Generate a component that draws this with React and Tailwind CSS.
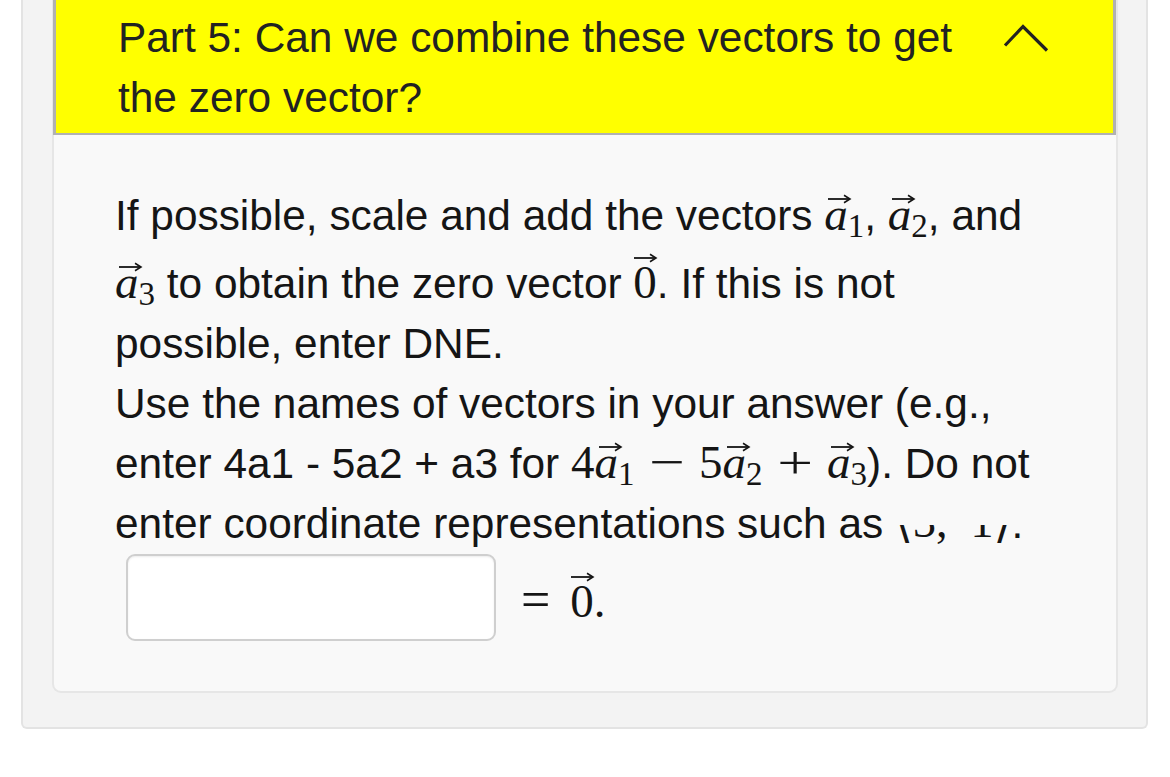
import React from "react";

const Arrow = ({ className }) => (
  <svg
    className={"absolute pointer-events-none " + className}
    width="25"
    height="10"
    viewBox="0 0 25 10"
    fill="none"
    stroke="currentColor"
  >
    <path d="M1 5H22" strokeWidth="1.8" />
    <path d="M17 1.2 L23 5 L17 8.8" strokeWidth="1.6" />
  </svg>
);

const VecA = ({ sub }) => (
  <span className="inline-block">
    <span className="relative inline-block italic">
      a
      <Arrow className="left-[3px] top-[3px]" />
    </span>
    <span className="text-[33px] align-[-7px] not-italic">{sub}</span>
  </span>
);

const VecZero = ({ className = "" }) => (
  <span className={"relative inline-block " + className}>
    0
    <Arrow className="left-[0px] bottom-[43px]" />
  </span>
);

const M = ({ children, className = "" }) => (
  <span
    className={
      "font-['Liberation_Serif','DejaVu_Serif',serif] text-[47px] leading-none " +
      className
    }
  >
    {children}
  </span>
);

const Op = ({ children }) => (
  <span className="inline-block scale-x-[1.35] mx-[19px]">{children}</span>
);

export default function App() {
  return (
    <div className="w-[1170px] h-[777px] bg-white font-['Liberation_Sans',Arial,Helvetica,sans-serif] text-[#151515] overflow-hidden">
      <div className="ml-[21px] w-[1127px] bg-[#f3f3f3] border-x-2 border-b-2 border-[#e3e3e3] rounded-b-[6px] pl-[29px] pr-[28px] pb-[34px]">
        <div className="bg-[#f9f9f9] border-x-2 border-b-2 border-[#e6e6e6] rounded-b-[9px]">
          {/* Header */}
          <div className="-ml-[1px] bg-[#ffff00] border-l-[3px] border-r-[3px] border-b-2 border-[#b1b1b1] flex pl-[62px] pt-[8px] pb-[5px]">
            <div className="flex-1 text-[42.4px] leading-[60px] text-[#222]">
              Part 5: Can we combine these vectors to get the zero vector?
            </div>
            <div className="w-[46px] mr-[64px] ml-[12px] pt-[16px]">
              <svg width="46" height="28" viewBox="0 0 46 28" fill="none">
                <polyline
                  points="2,21.5 20,2.5 44,26.5"
                  stroke="#222"
                  strokeWidth="3.2"
                  strokeLinecap="butt"
                  strokeLinejoin="miter"
                />
              </svg>
            </div>
          </div>

          {/* Body */}
          <div className="pl-[61px] pr-[60px] pt-[51px] pb-[50px]">
            <div className="text-[42.4px] leading-[60px]">
              If possible, scale and add the vectors{" "}
              <M>
                <VecA sub="1" />
              </M>
              ,{" "}
              <M>
                <VecA sub="2" />
              </M>
              , and{" "}
              <M>
                <VecA sub="3" />
              </M>{" "}
              to obtain the zero vector{" "}
              <M>
                <VecZero className="pt-[13px]" />
              </M>
              . If this is not possible, enter DNE.
              <br />
              Use the names of vectors in your answer (e.g., enter 4a1 - 5a2 + a3 for{" "}
              <M>
                4<VecA sub="1" />
                <Op>−</Op>5<VecA sub="2" />
                <Op>+</Op>
                <VecA sub="3" />
              </M>
              ). Do not enter coordinate representations such as{" "}
              <span className="inline-block overflow-hidden h-[22px] align-[-9px]">
                <span className="block whitespace-nowrap font-['Liberation_Serif','DejaVu_Serif',serif] text-[46px] leading-[46px] mt-[-26px]">
                  ⟨3,&nbsp;&nbsp;1⟩
                </span>
              </span>
              .
            </div>

            <div className="flex items-center pl-[11px]">
              <div className="w-[370px] h-[87px] bg-white border-2 border-[#cfcfcf] rounded-[9px] shadow-[inset_0_1px_2px_rgba(0,0,0,0.08)]" />
              <M className="ml-[25px] mt-[4px]">
                <span className="text-[52px]">=</span>
                <span className="ml-[20px]"></span>
                <VecZero />.
              </M>
            </div>
          </div>
        </div>
      </div>
    </div>
  );
}
